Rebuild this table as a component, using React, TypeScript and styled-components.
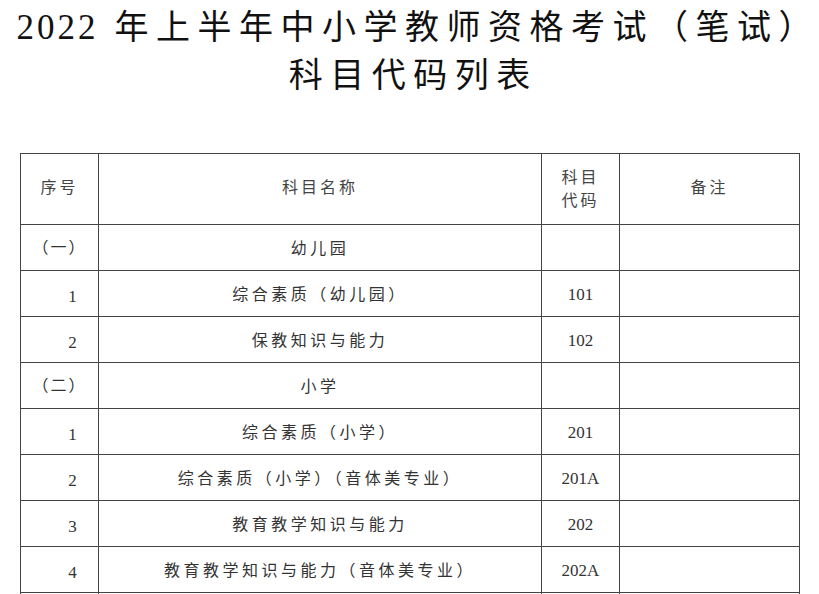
import React from "react";
import styled, { createGlobalStyle } from "styled-components";

const GlobalStyle = createGlobalStyle`
  html, body {
    margin: 0;
    padding: 0;
    background: #ffffff;
  }
  body {
    font-family: "Liberation Serif", "Noto Sans CJK SC", serif;
    color: #111;
  }
`;

type Row = {
  no: string;
  name: string;
  code?: string;
  group?: boolean;
};

const rows: Row[] = [
  { no: "（一）", name: "幼儿园", group: true },
  { no: "1", name: "综合素质（幼儿园）", code: "101" },
  { no: "2", name: "保教知识与能力", code: "102" },
  { no: "（二）", name: "小学", group: true },
  { no: "1", name: "综合素质（小学）", code: "201" },
  { no: "2", name: "综合素质（小学）（音体美专业）", code: "201A" },
  { no: "3", name: "教育教学知识与能力", code: "202" },
  { no: "4", name: "教育教学知识与能力（音体美专业）", code: "202A" },
  { no: "", name: "", code: "" },
];

const App = () => {
  return (
    <Page>
      <GlobalStyle />
      <Title>
        <TitleLine $shift={10}>
          <Year>2022</Year> 年上半年中小学教师资格考试（笔试）
        </TitleLine>
        <TitleLine>科目代码列表</TitleLine>
      </Title>

      <Table>
        <colgroup>
          <col style={{ width: 78 }} />
          <col style={{ width: 443 }} />
          <col style={{ width: 78 }} />
          <col style={{ width: 180 }} />
        </colgroup>
        <thead>
          <HeadRow>
            <HeadCell>序号</HeadCell>
            <HeadCell>科目名称</HeadCell>
            <HeadCell>
              <CodeHead>
                科目
                <br />
                代码
              </CodeHead>
            </HeadCell>
            <HeadCell>备注</HeadCell>
          </HeadRow>
        </thead>
        <tbody>
          {rows.map((row, i) => (
            <BodyRow key={i}>
              <NoCell $group={row.group}>{row.no}</NoCell>
              <NameCell>{row.name}</NameCell>
              <CodeCell>{row.code}</CodeCell>
              <Cell />
            </BodyRow>
          ))}
        </tbody>
      </Table>
    </Page>
  );
};

const Page = styled.div`
  width: 819px;
  height: 594px;
  overflow: hidden;
  padding-top: 4px;
  box-sizing: border-box;
`;

const Title = styled.div`
  display: flex;
  flex-direction: column;
  align-items: center;
  margin-bottom: 53px;
`;

const TitleLine = styled.div<{ $shift?: number }>`
  font-family: "Liberation Serif", "Noto Sans CJK SC", serif;
  font-size: 34px;
  font-weight: 400;
  letter-spacing: 7.5px;
  line-height: 48px;
  color: #111;
  white-space: nowrap;
  margin-right: -7.5px;
  padding-left: ${(p) => p.$shift ?? 0}px;
`;

const Year = styled.span`
  letter-spacing: 3px;
  font-size: 35px;
`;

const Table = styled.table`
  margin-left: 20px;
  width: 779px;
  border-collapse: collapse;
  table-layout: fixed;
  border: 1.5px solid #444;
`;

const HeadRow = styled.tr`
  height: 71px;
`;

const BodyRow = styled.tr`
  height: 46px;
`;

const Cell = styled.td`
  border: 1.5px solid #444;
  padding: 0;
  text-align: center;
  vertical-align: middle;
  color: #333;
  font-size: 16px;
  font-family: "Liberation Serif", "Noto Sans CJK SC", serif;
`;

const HeadCell = styled.th`
  border: 1.5px solid #444;
  padding: 0 0 6px 0;
  text-align: center;
  vertical-align: middle;
  color: #444;
  font-size: 16px;
  font-weight: 400;
  letter-spacing: 3px;
  font-family: "Liberation Serif", "Noto Sans CJK SC", serif;
`;

const CodeHead = styled.span`
  display: inline-block;
  line-height: 23px;
  padding-top: 6px;
`;

const NoCell = styled(Cell)<{ $group?: boolean }>`
  padding-top: ${(p) => (p.$group ? "0" : "6px")};
  padding-left: ${(p) => (p.$group ? "0" : "26px")};
  padding-bottom: ${(p) => (p.$group ? "4px" : "0")};
  letter-spacing: ${(p) => (p.$group ? "2px" : "0")};
  font-size: ${(p) => (p.$group ? "16px" : "17px")};
`;

const NameCell = styled(Cell)`
  letter-spacing: 3.5px;
  padding-bottom: 2px;
`;

const CodeCell = styled(Cell)`
  padding-top: 2px;
  font-size: 17px;
`;

export default App;
